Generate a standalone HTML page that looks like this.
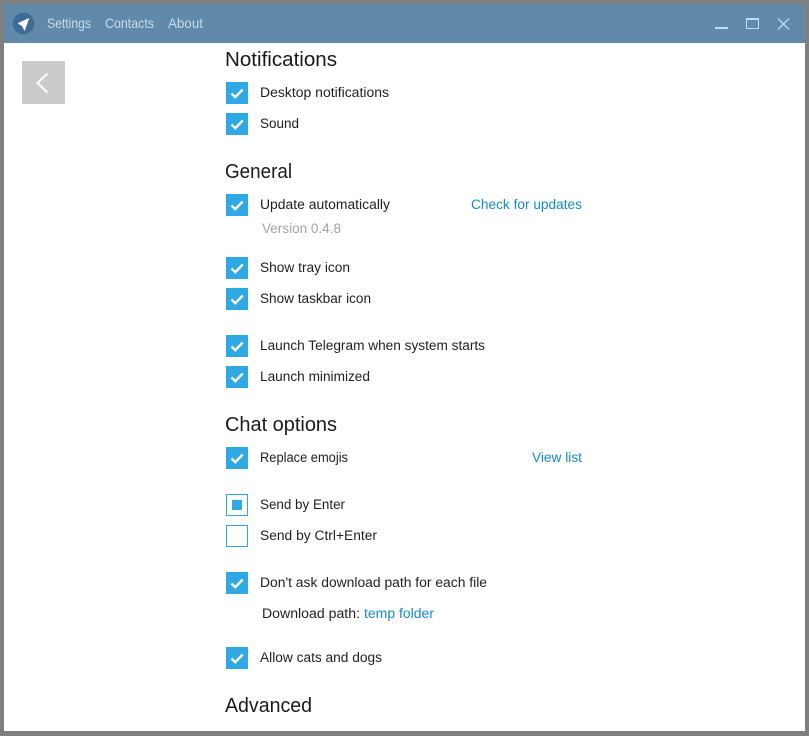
<!DOCTYPE html>
<html><head><meta charset="utf-8"><style>
html,body{margin:0;padding:0;background:#7f7f7f;width:809px;height:736px;overflow:hidden}
svg{display:block}
text{font-family:"Liberation Sans",sans-serif;font-size:13.5px;fill:#1f1f1f}
.h{font-size:20px;fill:#1a1a1a}
.n{fill:#c5dcf0;font-size:14px}
.l{fill:#168acd}
.g{fill:#a3a3a3}
</style></head><body>
<svg width="809" height="736" viewBox="0 0 809 736" xmlns="http://www.w3.org/2000/svg">
<defs>
<g id="c"><rect width="22" height="22" fill="#2fa8e4"/><path d="M5.500 11.500l3.800 3.700 7.400-7.700" fill="none" stroke="#fff" stroke-width="2.400"/></g>
</defs>
<rect x="0" y="0" width="809" height="736" fill="#7f7f7f"/>
<rect x="4" y="4" width="801" height="727" fill="#fff"/>
<rect x="4" y="4" width="801" height="39" fill="#6089aa"/>
<circle cx="23.500" cy="23.500" r="10.800" fill="#3f6c94"/>
<path d="M17.500 23.300L29.300 18L24.500 31.300L22.300 26.300Z" fill="#fff"/>
<text class="n" x="47" y="28" textLength="44" lengthAdjust="spacingAndGlyphs">Settings</text>
<text class="n" x="105" y="28" textLength="49" lengthAdjust="spacingAndGlyphs">Contacts</text>
<text class="n" x="168" y="28" textLength="35" lengthAdjust="spacingAndGlyphs">About</text>
<rect x="715" y="27" width="13" height="2" fill="#c5dcf0"/>
<rect x="746.500" y="18.500" width="12" height="10" fill="none" stroke="#c5dcf0"/>
<rect x="746" y="18" width="13" height="2" fill="#c5dcf0"/>
<path d="M778 18.500L789 29.500M789 18.500L778 29.500" stroke="#bcd3e7" stroke-width="1.500" fill="none"/>
<rect x="22" y="61" width="43" height="43" fill="#cbcbcb"/>
<path d="M47.500 73.500L37.500 83l10 9.500" fill="none" stroke="#fff" stroke-width="2"/>

<text class="h" x="225" y="66" textLength="112" lengthAdjust="spacingAndGlyphs">Notifications</text>
<use href="#c" x="226" y="82"/>
<text x="260" y="97" textLength="129" lengthAdjust="spacingAndGlyphs">Desktop notifications</text>
<use href="#c" x="226" y="113"/>
<text x="260" y="128" textLength="39" lengthAdjust="spacingAndGlyphs">Sound</text>

<text class="h" x="225" y="178" textLength="67" lengthAdjust="spacingAndGlyphs">General</text>
<use href="#c" x="226" y="194"/>
<text x="260" y="209" textLength="130" lengthAdjust="spacingAndGlyphs">Update automatically</text>
<text class="l" x="471" y="209" textLength="111" lengthAdjust="spacingAndGlyphs">Check for updates</text>
<text class="g" x="262" y="233" textLength="79" lengthAdjust="spacingAndGlyphs">Version 0.4.8</text>
<use href="#c" x="226" y="257"/>
<text x="260" y="272" textLength="90" lengthAdjust="spacingAndGlyphs">Show tray icon</text>
<use href="#c" x="226" y="288"/>
<text x="260" y="303" textLength="111" lengthAdjust="spacingAndGlyphs">Show taskbar icon</text>
<use href="#c" x="226" y="335"/>
<text x="260" y="350" textLength="225" lengthAdjust="spacingAndGlyphs">Launch Telegram when system starts</text>
<use href="#c" x="226" y="366"/>
<text x="260" y="381" textLength="110" lengthAdjust="spacingAndGlyphs">Launch minimized</text>

<text class="h" x="225" y="431" textLength="112" lengthAdjust="spacingAndGlyphs">Chat options</text>
<use href="#c" x="226" y="447"/>
<text x="260" y="462" textLength="88" lengthAdjust="spacingAndGlyphs">Replace emojis</text>
<text class="l" x="532" y="462" textLength="50" lengthAdjust="spacingAndGlyphs">View list</text>
<rect x="226.500" y="494.500" width="21" height="21" fill="#fff" stroke="#2fa8e4"/>
<rect x="232" y="500" width="10" height="10" fill="#2fa8e4"/>
<text x="260" y="509" textLength="85" lengthAdjust="spacingAndGlyphs">Send by Enter</text>
<rect x="226.500" y="525.500" width="21" height="21" fill="#fff" stroke="#2fa8e4"/>
<text x="260" y="540" textLength="117" lengthAdjust="spacingAndGlyphs">Send by Ctrl+Enter</text>
<use href="#c" x="226" y="572"/>
<text x="260" y="587" textLength="227" lengthAdjust="spacingAndGlyphs">Don't ask download path for each file</text>
<text x="262" y="618" textLength="98" lengthAdjust="spacingAndGlyphs">Download path:</text>
<text class="l" x="364" y="618" textLength="70" lengthAdjust="spacingAndGlyphs">temp folder</text>
<use href="#c" x="226" y="647"/>
<text x="260" y="662" textLength="122" lengthAdjust="spacingAndGlyphs">Allow cats and dogs</text>

<text class="h" x="225" y="712" textLength="87" lengthAdjust="spacingAndGlyphs">Advanced</text>
</svg>
</body></html>
